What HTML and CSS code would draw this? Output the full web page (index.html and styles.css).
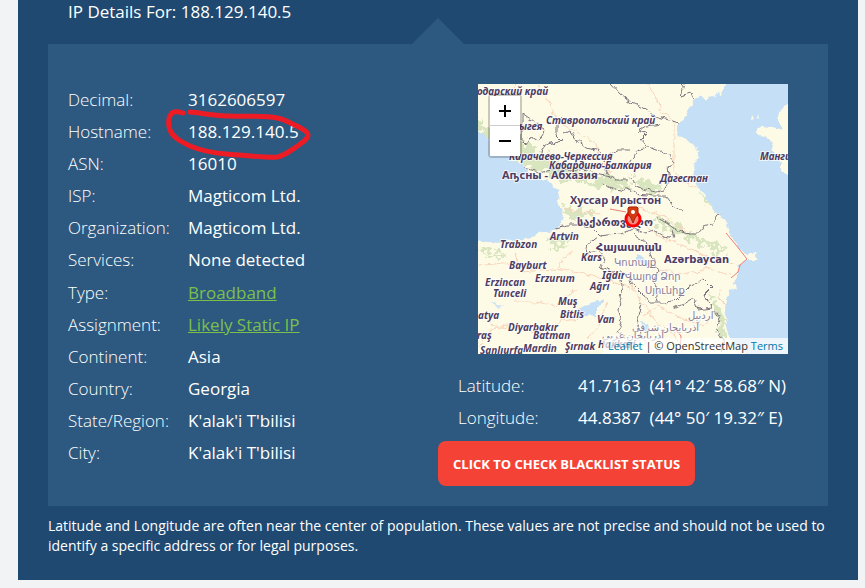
FILE: index.html
```html
<!DOCTYPE html>
<html lang="en">
<head>
  <meta charset="UTF-8" />
  <meta name="viewport" content="width=device-width, initial-scale=1" />
  <title>IP Details For: 188.129.140.5</title>
  <link rel="stylesheet" href="styles.css">
</head>
<body>
  <main class="details">
    <h1>IP Details For: 188.129.140.5</h1>

    <div class="panel">
      <dl class="info">
        <div class="row"><dt>Decimal:</dt><dd>3162606597</dd></div>
        <div class="row">
          <dt>Hostname:</dt>
          <dd class="marked">188.129.140.5
            <svg class="scribble" width="150" height="56" viewBox="164 106 150 56" aria-hidden="true">
              <path d="M183 113C180 112 174 110 171 114C168 118 168 126 170 130C173 138 182 142 190 146C202 151 214 153 226 154C240 155 266 158 277 157C284 156 290 151 296 147C302 143 308 139 308 135C308 131 302 129 297 126C290 123 284 119 277 118C264 115 246 117 230 116C216 116 202 113 190 112" />
            </svg>
          </dd>
        </div>
        <div class="row"><dt>ASN:</dt><dd>16010</dd></div>
        <div class="row"><dt>ISP:</dt><dd>Magticom Ltd.</dd></div>
        <div class="row"><dt>Organization:</dt><dd>Magticom Ltd.</dd></div>
        <div class="row"><dt>Services:</dt><dd>None detected</dd></div>
        <div class="row"><dt>Type:</dt><dd><a href="#">Broadband</a></dd></div>
        <div class="row"><dt>Assignment:</dt><dd><a href="#">Likely Static IP</a></dd></div>
        <div class="row"><dt>Continent:</dt><dd>Asia</dd></div>
        <div class="row"><dt>Country:</dt><dd>Georgia</dd></div>
        <div class="row"><dt>State/Region:</dt><dd>K'alak'i T'bilisi</dd></div>
        <div class="row"><dt>City:</dt><dd>K'alak'i T'bilisi</dd></div>
      </dl>

      <div class="location">
        <div class="map">
          <svg class="tiles" viewBox="0 0 310 270" preserveAspectRatio="xMidYMid slice" role="img" aria-label="Map of the Caucasus">
            <!-- roughens coasts, borders and woods -->
            <filter id="rough" x="0" y="0" width="310" height="270" filterUnits="userSpaceOnUse">
              <feTurbulence type="fractalNoise" baseFrequency="0.12" numOctaves="3" seed="4" />
              <feDisplacementMap in="SourceGraphic" scale="7" xChannelSelector="R" yChannelSelector="G" />
            </filter>
            <filter id="rougher" x="0" y="0" width="310" height="270" filterUnits="userSpaceOnUse">
              <feTurbulence type="fractalNoise" baseFrequency="0.16" numOctaves="3" seed="9" />
              <feDisplacementMap in="SourceGraphic" scale="22" xChannelSelector="R" yChannelSelector="G" />
            </filter>

            <rect class="land" width="310" height="270" />

            <!-- woods -->
            <g class="wood" filter="url(#rougher)">
              <path d="M0 34L9 43L20 50L36 58L48 57L62 68L78 76L92 82L106 88L124 92L142 95L152 102L144 107L128 102L112 101L98 95L84 96L68 88L54 86L40 77L28 68L12 56L0 47Z" />
              <path d="M152 92L170 97L184 106L176 112L160 104Z" />
              <path d="M86 122L100 126L118 128L106 136L90 134Z" />
              <path d="M178 133L196 139L212 149L230 157L248 165L244 169L226 162L208 154L192 147L178 142Z" />
              <path d="M233 210L241 220L247 232L247 252L240 252L241 236L234 224Z" />
              <path d="M66 158L84 152L98 156L80 163Z" />
              <path d="M0 168L16 167L30 172L14 174Z" />
              <path d="M222 104L234 120L240 130L230 122Z" />
            </g>

            <!-- seas and lakes, drawn past the edges of the map -->
            <g class="water" filter="url(#rough)">
              <path d="M-9 44L0 48L6 52L12 60L20 67L31 72L45 84L59 94L72 100L80 105L82 112L81 118L84 125L86 133L83 140L77 144L70 147L60 149L50 156L39 154L30 157L22 159L10 158L0 157L-9 157Z" />
              <path d="M248 -9L248 0L245 10L240 8L237 14L232 11L228 17L224 11L215 15L212 25L207 33L199 42L199 50L206 55L212 59L218 66L220 67L217 79L215 92L220 102L227 112L236 126L245 135L252 146L256 156L262 165L269 173L275 169L281 176L269 176L260 181L260 190L256 198L258 204L252 207L249 214L246 222L247 232L248 243L251 252L258 261L267 270V279H319V89H303V80L297 72L294 59L288 53L279 52V45L284 43L295 44L304 47L299 36L302 25L310 21H319V-9Z" />
              <path d="M100 225L112 219L127 215L126 219L119 223L119 234L112 230L104 233Z" />
              <path d="M158 170L164 173L172 180L165 181L158 176Z" />
              <path d="M164 238L170 240L172 249L166 247Z" />
              <path d="M12 216L20 220L28 221L20 223Z" />
            </g>
            <path class="land" d="M274 31L276 35L273 36ZM280 30L281 35L279 34ZM218 72L222 73L218 76Z" />

            <g class="road" filter="url(#rough)">
              <path d="M60 0L70 16L78 36L100 48L116 58L121 74L132 88" />
              <path d="M168 0L178 12L182 26L196 36L196 88L210 100L220 104" />
              <path d="M0 182L24 179L40 178L44 188L76 185L96 188L118 192L134 198L152 204" />
              <path d="M80 184L84 176L96 168M40 180L36 168" />
              <path d="M36 218L60 218L76 222L84 214L98 206" />
              <path d="M0 264L12 248L28 240L48 242L60 252L84 236L104 234" />
              <path d="M12 234L18 246L34 240M130 218L124 234L110 256" />
              <path d="M166 140L184 154L206 162L226 170L240 178L258 180" />
              <path d="M152 200L164 218L178 238L194 248L204 262L206 270" />
              <path d="M180 186L206 190L232 184L252 190" />
              <path d="M164 232L180 222L202 234L226 242L240 226" />
              <path d="M244 204L240 214L248 222M152 120L168 126L188 134L208 148" />
              <path d="M38 0L34 12M86 124L104 128L124 130" />
            </g>
            <path class="road main" d="M248 149L258 161L269 175L262 181L260 188L253 194M198 246L203 252L202 266M132 125L148 128" />

            <g class="border" filter="url(#rough)">
              <path d="M133 0L142 10L152 18L166 24L176 32L192 36L202 39" />
              <path d="M206 0L202 13L214 10L216 14" />
              <path d="M44 29L54 36L62 42L66 48L60 56L54 52L48 62L44 58L44 29" />
              <path d="M84 34L78 42L78 50L84 56L70 60L64 64L62 74" />
              <path d="M84 50L92 46L98 56L108 64L118 66L128 74L140 66L152 66" />
              <path d="M169 62L162 54L168 48L161 46L168 42L182 40" />
              <path d="M152 78L160 66L170 63L182 67L190 70L196 77L190 84L192 96L186 106L178 108L168 106L158 102L154 94" />
              <path d="M45 84L62 88L78 84L92 88L106 84L122 90L132 92L138 96L150 96" />
              <path d="M132 92L128 84L122 80L130 74" />
              <path d="M124 100L136 106L144 107L152 104L160 110L176 112L188 112L196 122L204 128" />
              <path d="M178 133L190 140L198 146L210 150L222 150L226 142L234 140L240 130" />
              <path d="M77 144L88 141L104 141L114 144L122 152L128 151L144 150L156 144L166 148L174 145L186 152L196 154L194 146" />
              <path d="M120 152L110 160L108 170L122 168L128 176L122 184L134 188L144 186L150 190" />
              <path d="M134 188L142 196L144 210L140 226L144 238L140 248L150 254" />
              <path d="M156 150L168 158L174 172L180 188L176 198L180 208L178 218" />
              <path d="M150 190L154 200L164 210L170 219L184 219L196 218L210 204L226 196L234 204L228 210L234 224L220 226L216 214L206 220L196 225" />
              <path d="M236 226L242 234L238 244L246 258L244 270M164 219L160 236L164 248L152 262" />
            </g>

            <g class="region">
              <text x="-7" y="11">нодарский край</text>
              <text x="41" y="46">ыгея</text>
              <text x="68" y="40">Ставропольский край</text>
              <text x="31" y="76">Карачаево-Черкессия</text>
              <text x="71" y="85">Кабардино-Балкария</text>
              <text x="182" y="98">Дагестан</text>
              <text x="282" y="76">Манги</text>
              <text x="22" y="164">Trabzon</text>
              <text x="72" y="156">Artvin</text>
              <text x="103" y="177">Kars</text>
              <text x="31" y="185">Bayburt</text>
              <text x="57" y="198">Erzurum</text>
              <text x="7" y="202">Erzincan</text>
              <text x="15" y="213">Tunceli</text>
              <text x="124" y="195">Iğdır</text>
              <text x="112" y="206">Ağrı</text>
              <text x="80" y="221">Muş</text>
              <text x="82" y="234">Bitlis</text>
              <text x="119" y="239">Van</text>
              <text x="0" y="235">atya</text>
              <text x="30" y="247">Diyarbakır</text>
              <text x="55" y="255">Batman</text>
              <text x="-1" y="255">raş</text>
              <text x="2" y="270">Şanlıurfa</text>
              <text x="45" y="268">Mardin</text>
              <text x="87" y="266">Şırnak</text>
              <text x="120" y="264">Hakkari</text>
            </g>
            <g class="region faint">
              <text x="136" y="182">Կոտայք</text>
              <text x="147" y="196">Վայոց Ձոր</text>
              <text x="167" y="210">Սյունիք</text>
              <text x="210" y="235">اردبیل</text>
              <text x="154" y="247">آذربایجان شرقی</text>
              <text x="124" y="255">آذربایجان غربی</text>
            </g>
            <g class="country">
              <text x="24" y="95">Аҧсны - Абхазия</text>
              <text x="92" y="120">Хуссар Ирыстон</text>
              <text x="99" y="142">საქართველო</text>
              <text x="118" y="167">Հայաստան</text>
              <text class="wide" x="186" y="179">Azərbaycan</text>
            </g>

            <circle class="spot" cx="155" cy="135" r="7" />
            <path class="pin" d="M151 123H159L160 124V130L157 134L155 139L153 134L150 130V124Z" />
            <circle class="pin-hole" cx="155" cy="128" r="2" />
          </svg>

          <div class="zoom">
            <button type="button" aria-label="Zoom in"><svg viewBox="0 0 12 12"><path d="M6 0V12M0 6H12" /></svg></button>
            <button type="button" aria-label="Zoom out"><svg viewBox="0 0 12 12"><path d="M0 6H12" /></svg></button>
          </div>
          <div class="attribution"><a href="#">Leaflet</a> | © OpenStreetMap <a href="#">Terms</a></div>
        </div>

        <dl class="coords">
          <div class="row"><dt>Latitude:</dt><dd>41.7163&nbsp; (41° 42′ 58.68″ N)</dd></div>
          <div class="row"><dt>Longitude:</dt><dd>44.8387&nbsp; (44° 50′ 19.32″ E)</dd></div>
        </dl>

        <button type="button" class="check">CLICK TO CHECK BLACKLIST STATUS</button>
      </div>
    </div>

    <p class="note">Latitude and Longitude are often near the center of population. These values are not precise and should not be used to identify a specific address or for legal purposes.</p>
  </main>
</body>
</html>
```

FILE: styles.css
```css
* {
  box-sizing: border-box;
}

body {
  margin: 0;
  background-color: #f1f3f5;
  color: #fff;
  font-family: "Open Sans", "Noto Sans", sans-serif;
  font-size: 17px;
}

.details {
  margin: 0 7px 8px 18px;
  padding: 0 30px 24px;
  background-color: #1f4971;
}

h1 {
  margin: 0;
  padding: 0 20px 20px;
  font-size: 17px;
  font-weight: 400;
  line-height: 24px;
}

.panel {
  position: relative;
  display: flex;
  padding: 40px 40px 20px 20px;
  background-color: #2d5980;
}

/* arrow on the top edge */
.panel::before {
  content: "";
  position: absolute;
  bottom: 100%;
  left: 50%;
  margin-left: -26px;
  border: 26px solid transparent;
  border-top: 0;
  border-bottom-color: #2d5980;
}

dl,
dd {
  margin: 0;
}

.info {
  flex: 1;
  display: grid;
  grid-auto-rows: 1fr;
  padding-bottom: 17px;
}

.row {
  display: flex;
  align-items: center;
  line-height: 32px;
}

dt {
  width: 120px;
  font-weight: 300;
}

dd {
  font-weight: 500;
  white-space: nowrap;
}

dd a {
  color: #7cc04b;
  font-weight: 400;
}

.marked {
  position: relative;
}

.scribble {
  position: absolute;
  top: -10px;
  left: -24px;
  fill: none;
  stroke: #ed1c24;
  stroke-width: 5;
  stroke-linecap: round;
}

.location {
  width: 350px;
}

.map {
  position: relative;
  height: 270px;
  margin-left: 40px;
  overflow: hidden;
}

.tiles {
  display: block;
  width: 100%;
  height: 100%;
}

.land {
  fill: #fdfbe5;
}

.water {
  fill: #c5dff6;
}

.wood {
  fill: #c9dcae;
  opacity: 0.7;
}

.road {
  fill: none;
  stroke: #f8d3bb;
}

.main {
  stroke: #ee7d76;
}

.border {
  fill: none;
  stroke: #7d737f;
  stroke-linejoin: round;
}

.region,
.country {
  fill: #4e3d63;
  stroke: #fff;
  stroke-opacity: 0.7;
  stroke-width: 2px;
  paint-order: stroke;
  font-family: "Noto Sans", "DejaVu Sans", sans-serif;
  font-weight: 700;
}

.region {
  font-size: 10px;
  font-style: italic;
}

.faint {
  fill: #8b7d95;
  font-style: normal;
  font-weight: 400;
}

.country {
  font-size: 11px;
}

.wide {
  font-family: "DejaVu Sans", sans-serif;
  font-size: 10px;
}

.spot {
  fill: #f58a80;
  stroke: #f00;
  stroke-width: 3px;
}

.pin {
  fill: #d43a10;
  stroke: #a52508;
}

.pin-hole {
  fill: #fff;
}

.zoom {
  position: absolute;
  top: 10px;
  left: 10px;
  border: 2px solid rgba(0, 0, 0, 0.2);
  border-radius: 4px;
  background-clip: padding-box;
}

.zoom button {
  display: flex;
  align-items: center;
  justify-content: center;
  width: 30px;
  height: 30px;
  padding: 0;
  border: 0;
  background-color: #fff;
}

.zoom button:first-child {
  border-bottom: 1px solid #ccc;
}

.zoom svg {
  width: 12px;
  height: 12px;
  stroke: #000;
  stroke-width: 2;
}

.attribution {
  position: absolute;
  right: 0;
  bottom: 0;
  padding: 0 5px;
  background-color: rgba(255, 255, 255, 0.7);
  color: #333;
  font-size: 11px;
  line-height: 16px;
}

.attribution a {
  color: #0078a8;
  text-decoration: none;
}

.coords {
  padding: 16px 0 7px 20px;
}

.check {
  height: 45px;
  padding: 0 15px;
  border: 0;
  border-radius: 8px;
  background-color: #f44336;
  color: #fff;
  font-family: inherit;
  font-size: 13px;
  font-weight: 700;
  cursor: pointer;
}

.note {
  margin: 10px 0 0;
  font-size: 14px;
  font-weight: 500;
  line-height: 20px;
}
```
